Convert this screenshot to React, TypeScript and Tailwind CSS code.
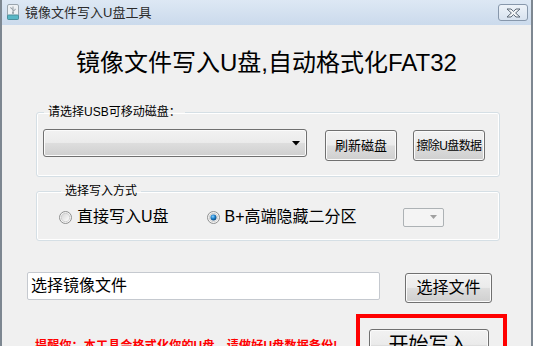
import React from "react";

const font = { fontFamily: '"Liberation Sans", "Noto Sans CJK SC", sans-serif' };

function WinButton({ className, children }: { className: string; children: React.ReactNode }) {
  return (
    <div
      className={
        "flex items-center justify-center whitespace-nowrap rounded-[3px] border border-[#707070] bg-[linear-gradient(to_bottom,#f2f2f2_0%,#ebebeb_48%,#dddddd_52%,#cfcfcf_100%)] text-black shadow-[inset_0_0_0_1px_#fbfbfb] " +
        className
      }
    >
      {children}
    </div>
  );
}

function Radio({ checked }: { checked?: boolean }) {
  return (
    <svg width="13" height="13" viewBox="0 0 13 13">
      <defs>
        <linearGradient id="rg" x1="0" y1="0" x2="1" y2="1">
          <stop offset="0" stopColor="#d5d5d5" />
          <stop offset="1" stopColor="#ffffff" />
        </linearGradient>
        <radialGradient id="dot" cx="0.4" cy="0.35" r="0.7">
          <stop offset="0" stopColor="#8fd4ff" />
          <stop offset="0.5" stopColor="#1c7fc9" />
          <stop offset="1" stopColor="#0b3e6e" />
        </radialGradient>
      </defs>
      <circle cx="6.5" cy="6.5" r="6" fill="#f4f4f4" stroke="#8e8f8f" strokeWidth="1" />
      <circle cx="6.5" cy="6.5" r="4.2" fill="url(#rg)" stroke="#c9c9c9" strokeWidth="0.8" />
      {checked && <circle cx="6.5" cy="6.5" r="3" fill="url(#dot)" />}
    </svg>
  );
}

function UsbIcon() {
  return (
    <svg width="14" height="17" viewBox="0 0 14 17">
      <rect x="1.5" y="0.5" width="11" height="15" rx="1.5" fill="#eef1f4" stroke="#9aa4ad" />
      <rect x="1.5" y="11" width="11" height="4.5" rx="1" fill="#58b7c6" stroke="#4a8f9c" />
      <path d="M7 2.5 V9 M7 5.5 L4.8 4.2 V3.2 M7 7 L9.2 5.8 V4.8" stroke="#8a949c" strokeWidth="0.9" fill="none" />
      <circle cx="7" cy="9" r="0.9" fill="#8a949c" />
    </svg>
  );
}

export default function App() {
  return (
    <div className="h-[359px] w-[533px] bg-white" style={font}>
      <div className="flex h-[346px] flex-col overflow-hidden border-x-2 border-[#7d8791]">
        <div className="flex h-[25px] shrink-0 items-center justify-between bg-[linear-gradient(to_bottom,#dde8f4,#cbdaec)] pl-[4px] pr-[3px]">
          <div className="flex items-center gap-[5px]">
            <UsbIcon />
            <span className="text-[13px] text-[#2b2b2b]">镜像文件写入U盘工具</span>
          </div>
          <div className="flex h-[17px] w-[30px] items-center justify-center rounded-[3px] border border-[#8797ab] bg-[linear-gradient(to_bottom,#eef3f9,#d7e2ef)]">
            <svg width="15" height="10" viewBox="0 0 15 10">
              <path
                d="M1 1 H5 L7.5 3.4 L10 1 H14 L9.6 5 L14 9 H10 L7.5 6.6 L5 9 H1 L5.4 5 Z"
                fill="#f4f6f8"
                stroke="#5c6876"
                strokeWidth="1"
                strokeLinejoin="round"
              />
            </svg>
          </div>
        </div>

        <div className="flex flex-1 flex-col bg-[#f0f0f0]">
          <h1 className="mt-[24px] text-center text-[24px] leading-[28px] text-black">
            镜像文件写入U盘,自动格式化FAT32
          </h1>

          <fieldset className="ml-[34px] mt-[28px] w-[464px] rounded-[3px] border border-[#d5dfe5] pb-[15px] pl-[6px] shadow-[inset_0_0_0_1px_#ffffff]">
            <legend className="ml-[1px] px-[4px] text-[12px] leading-[14px] text-black">请选择USB可移动磁盘：</legend>
            <div className="mt-[10px] flex items-start">
              <WinButton className="h-[28px] w-[264px] justify-end pr-[6px]">
                <svg width="8" height="5" viewBox="0 0 8 5">
                  <path d="M0 0 H8 L4 4.5 Z" fill="#000" />
                </svg>
              </WinButton>
              <WinButton className="ml-[18px] mt-[1px] h-[31px] w-[72px] text-[13px]">刷新磁盘</WinButton>
              <WinButton className="ml-[16px] mt-[1px] h-[31px] w-[72px] text-[12px] tracking-[-0.6px]">擦除U盘数据</WinButton>
            </div>
          </fieldset>

          <fieldset className="ml-[34px] mt-[7px] w-[464px] rounded-[3px] border border-[#d5dfe5] pb-[13px] pl-[22px] shadow-[inset_0_0_0_1px_#ffffff]">
            <legend className="ml-[2px] px-[4px] text-[12px] leading-[14px] text-black">选择写入方式</legend>
            <div className="mt-[9px] flex items-center">
              <div className="flex items-center gap-[5px]">
                <Radio />
                <span className="text-[16px] leading-[20px] text-black">直接写入U盘</span>
              </div>
              <div className="ml-[38px] flex items-center gap-[5px]">
                <Radio checked />
                <span className="text-[16px] leading-[20px] text-black">B+高端隐藏二分区</span>
              </div>
              <div className="ml-[46px] flex h-[19px] w-[41px] items-center justify-end rounded-[2px] border border-[#adb2b5] bg-[#f4f4f4] pr-[6px]">
                <svg width="7" height="4" viewBox="0 0 7 4">
                  <path d="M0 0 H7 L3.5 4 Z" fill="#a0a0a0" />
                </svg>
              </div>
            </div>
          </fieldset>

          <div className="ml-[25px] mt-[31px] flex items-start">
            <div className="flex h-[28px] w-[353px] items-center rounded-[2px] border border-[#c5c9cf] bg-white pl-[3px] text-[16px] text-black">
              选择镜像文件
            </div>
            <WinButton className="ml-[25px] mt-[1px] h-[30px] w-[87px] text-[16px]">选择文件</WinButton>
          </div>

          <div className="mt-[11px] flex items-start">
            <p className="ml-[33px] mt-[24px] whitespace-nowrap text-[12px] font-bold leading-[16px] tracking-[0.2px] text-[#ff0000]">
              提醒你：本工具会格式化你的U盘，请做好U盘数据备份!
            </p>
            <div className="ml-[18px] border-4 border-[#ff0000] pl-[9px] pr-[14px] pt-[11px] pb-[10px]">
              <WinButton className="h-[32px] w-[120px] text-[20px]">开始写入</WinButton>
            </div>
          </div>
        </div>
      </div>
    </div>
  );
}
